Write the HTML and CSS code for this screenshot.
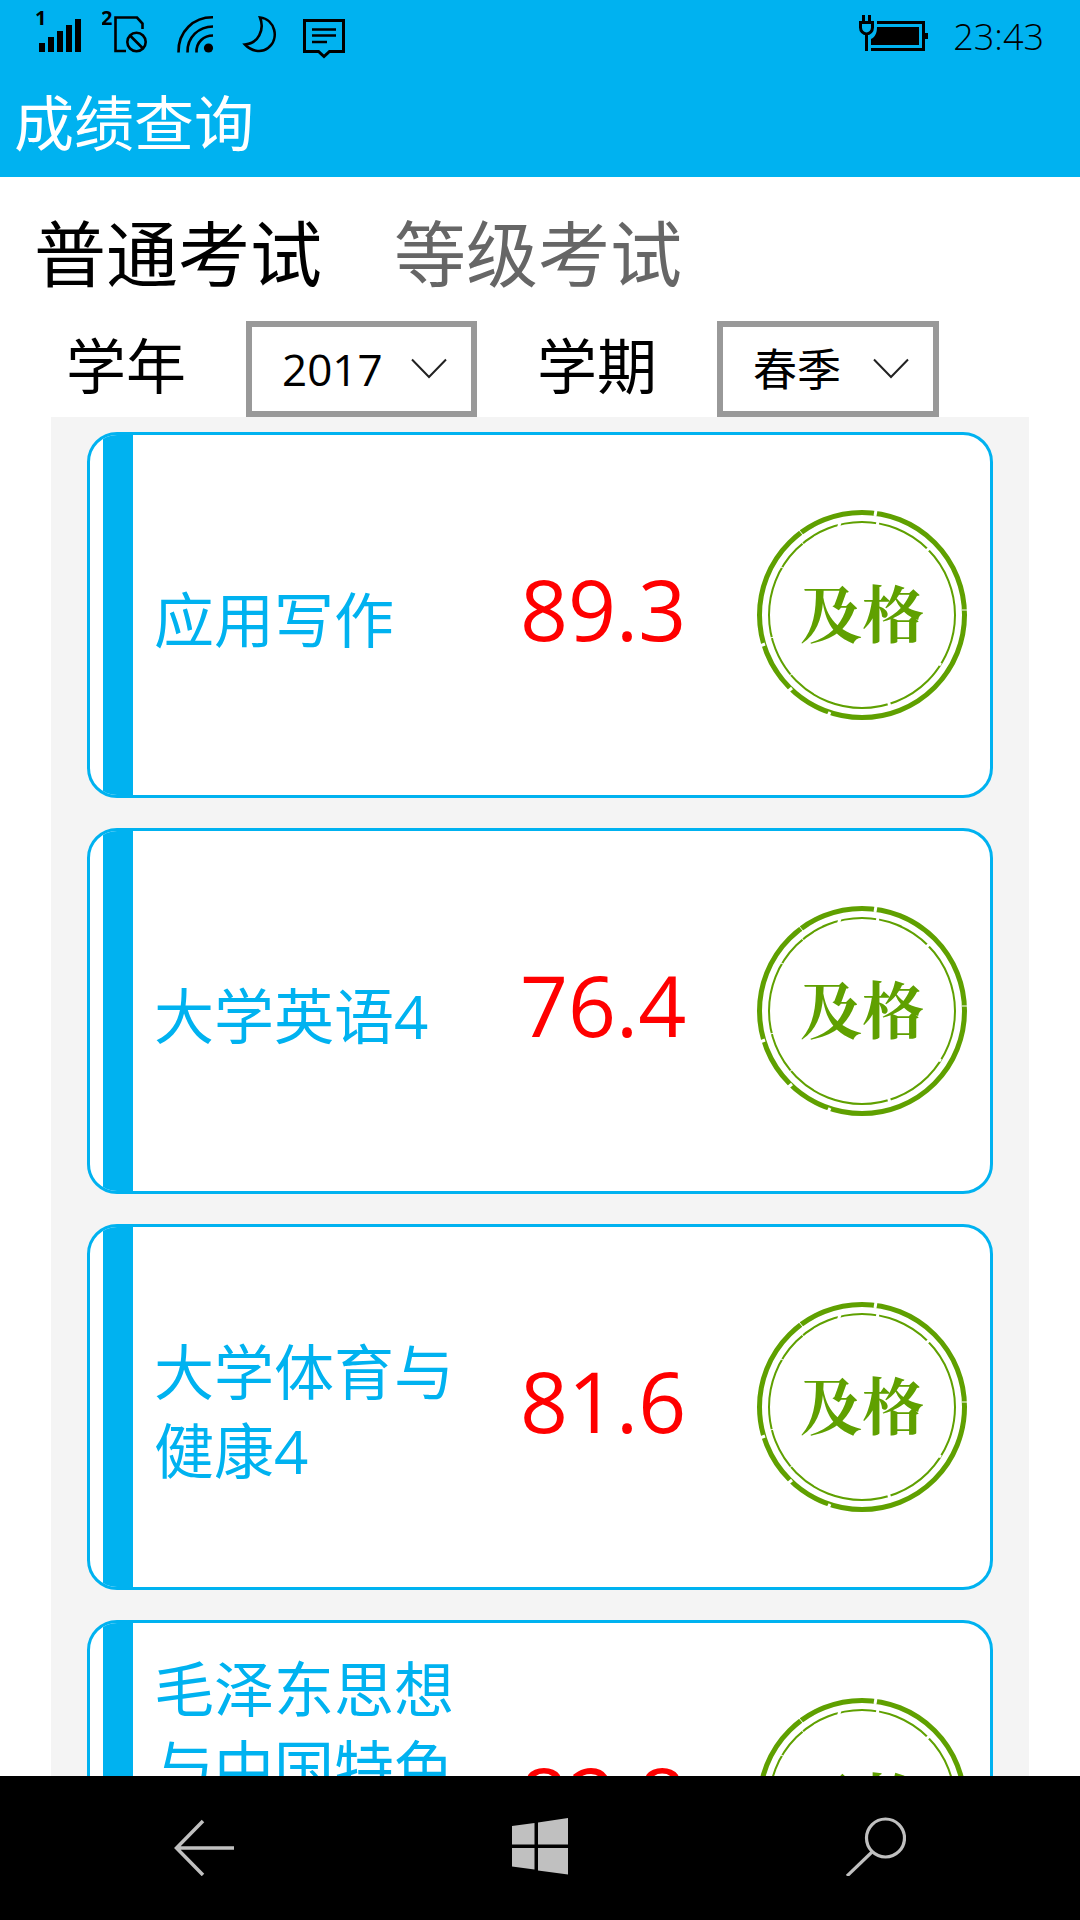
FILE: index.html
```html
<!DOCTYPE html>
<html lang="zh-CN">
<head>
<meta charset="utf-8">
<meta name="viewport" content="width=device-width, initial-scale=1">
<title>成绩查询</title>
<link rel="stylesheet" href="styles.css">
</head>
<body>
<svg class="defs" aria-hidden="true">
  <symbol id="stamp-ring" viewBox="0 0 210 210">
    <g fill="none" stroke="#5fa000">
      <circle cx="105" cy="105" r="102.5" stroke-width="5"/>
      <circle cx="105" cy="105" r="93" stroke-width="2"/>
    </g>
    <g stroke="#fff" stroke-width="3">
      <path d="M119 0l-1 6M121 11l-1 6M169 41l5-4M184 155l-5-4M133 197l-2-7M0 137l8-3M29 183l6-5M70 208l3-6M83 12l-2 8"/>
      <path stroke-width="1" d="M42 20l4 5M43 30l4 5M24 57l4 2M10 129l7-2M31 167l5-4M205 100h5"/>
    </g>
  </symbol>
</svg>

<header class="header">
  <div class="status">
    <div class="status-icons">
      <svg width="45" height="66" viewBox="36 0 45 66" role="img" aria-label="SIM 1">
        <text class="sim-no" x="35" y="25">1</text>
        <path d="M39 43h6v9h-6zM48 37h6v15h-6zM57 31h6v21h-6zM66 25h6v27h-6zM75 19h6v33h-6z"/>
      </svg>
      <svg width="48" height="66" viewBox="102 0 48 66" role="img" aria-label="SIM 2">
        <text class="sim-no" x="101" y="25">2</text>
        <g fill="none" stroke="#000" stroke-width="2.6">
          <path d="M126 51h-10.500V17.500H137l5.500 6V29"/>
          <circle cx="136.500" cy="42" r="9.200"/>
          <path d="M130 35.500l13 13"/>
        </g>
      </svg>
      <svg width="45" height="66" viewBox="171 0 45 66" role="img" aria-label="Wi-Fi">
        <circle cx="208.500" cy="48" r="4.600"/>
        <g fill="none" stroke="#000" stroke-width="2.600">
          <path d="M178.500 52.500C178 31 194 17 213 17.300M187.500 52.500C187 37 199 26.500 213 26.500M196.500 52.500C196 42 204 35.500 213 35.500"/>
        </g>
      </svg>
      <svg width="42" height="66" viewBox="237 0 42 66" role="img" aria-label="免打扰">
        <path fill="none" stroke="#000" stroke-width="2.600" d="M260 17.500C265 30 258 43.500 245 44.500C251 51 261 53.500 268 48C280 39 275 19 260 17.500Z"/>
      </svg>
      <svg width="48" height="66" viewBox="300 0 48 66" role="img" aria-label="消息">
        <path fill="none" stroke="#000" stroke-width="3" d="M304.500 20.500h39v31h-14l-5.500 5-5.500-5h-14z"/>
        <path fill="none" stroke="#000" stroke-width="2.600" d="M312 29.500h24M312 35.500h24M312 42h15"/>
      </svg>
    </div>
    <div class="status-right">
      <svg width="72" height="66" viewBox="856 0 72 66" role="img" aria-label="正在充电">
        <path fill="none" stroke="#000" stroke-width="3" d="M876 22.500h46.500v27H870M865.500 35v16M862.500 15v7M868.500 15v7M859.500 22.500h12v5a6 6.500 0 0 1-12 0z"/>
        <path d="M876 27h42v18h-48v-6c4-2 6-6 6-12zM924 33h3v6h-3z"/>
      </svg>
      <time class="clock">23:43</time>
    </div>
  </div>
  <h1 class="title">成绩查询</h1>
</header>

<nav class="tabs">
  <button class="tab tab-active" type="button">普通考试</button>
  <button class="tab" type="button">等级考试</button>
</nav>

<form class="filters">
  <label class="filter-label" for="year">学年</label>
  <div class="select-box">
    <select id="year" class="select"><option>2017</option></select>
    <svg class="chevron" width="36" height="22" viewBox="0 0 36 22"><path d="M1 1.500l17 17.500 17-17.500"/></svg>
  </div>
  <label class="filter-label" for="term">学期</label>
  <div class="select-box">
    <select id="term" class="select"><option>春季</option></select>
    <svg class="chevron" width="36" height="22" viewBox="0 0 36 22"><path d="M1 1.500l17 17.500 17-17.500"/></svg>
  </div>
</form>

<main class="list">
  <article class="card">
    <div class="name">应用写作</div>
    <div class="score">89.3</div>
    <div class="stamp"><svg class="ring"><use href="#stamp-ring"/></svg><span class="stamp-text">及格</span></div>
  </article>
  <article class="card">
    <div class="name">大学英语4</div>
    <div class="score">76.4</div>
    <div class="stamp"><svg class="ring"><use href="#stamp-ring"/></svg><span class="stamp-text">及格</span></div>
  </article>
  <article class="card">
    <div class="name">大学体育与健康4</div>
    <div class="score">81.6</div>
    <div class="stamp"><svg class="ring"><use href="#stamp-ring"/></svg><span class="stamp-text">及格</span></div>
  </article>
  <article class="card">
    <div class="name">毛泽东思想与中国特色社会主义理论体系概论</div>
    <div class="score">82.8</div>
    <div class="stamp"><svg class="ring"><use href="#stamp-ring"/></svg><span class="stamp-text">及格</span></div>
  </article>
</main>

<footer class="navbar">
  <button class="nav-button" type="button" aria-label="返回">
    <svg width="60" height="60" viewBox="0 0 60 60" fill="none" stroke="#c0c0c0" stroke-width="3.500"><path d="M60 32H3M29 5L2.500 32 29 59"/></svg>
  </button>
  <button class="nav-button" type="button" aria-label="开始">
    <svg width="60" height="60" viewBox="0 0 60 60" fill="#c0c0c0"><path d="M2 10l22.500-3v21.500H2zM28 6.500L58 2v26.500H28zM2 32h22.500v21.500L2 50.500zM28 32h30v26.500l-30-4z"/></svg>
  </button>
  <button class="nav-button" type="button" aria-label="搜索">
    <svg width="60" height="60" viewBox="0 0 60 60" fill="none" stroke="#c0c0c0" stroke-width="3.200"><circle cx="39.500" cy="22" r="19"/><path d="M26 36L1 60"/></svg>
  </button>
</footer>
</body>
</html>
```
FILE: styles.css
```css
* {
  box-sizing: border-box;
}

body {
  margin: 0;
  height: 100vh;
  display: flex;
  flex-direction: column;
  background: #fff;
  color: #000;
  font-family: "Open Sans", "Noto Sans CJK SC", sans-serif;
}

button {
  padding: 0;
  border: 0;
  background: none;
  color: inherit;
  font: inherit;
}

.defs {
  display: none;
}

/* Header */
.header {
  flex: none;
  background: #00b2f0;
}

.status {
  display: flex;
  justify-content: space-between;
  height: 66px;
  padding: 0 36px;
}

.status-icons {
  display: flex;
  gap: 21px;
}

.status-right {
  display: flex;
  gap: 24px;
}

.sim-no {
  font-size: 20px;
  font-weight: 700;
}

.clock {
  font-size: 36px;
  font-weight: 300;
  line-height: 74px;
}

.title {
  margin: 0;
  padding: 3px 14px 0;
  color: #fff;
  font-size: 60px;
  font-weight: 400;
  line-height: 108px;
}

/* Tabs */
.tabs {
  flex: none;
  display: flex;
  gap: 72px;
  padding: 8px 34px 0;
}

.tab {
  color: #666;
  font-size: 72px;
  line-height: 136px;
}

.tab-active {
  color: #000;
}

/* Filters */
.filters {
  flex: none;
  display: flex;
  gap: 60px;
  padding: 0 66px;
}

.filter-label {
  font-size: 60px;
  line-height: 90px;
}

.select-box {
  position: relative;
}

.select {
  display: block;
  min-width: 222px;
  height: 96px;
  padding: 0 88px 0 30px;
  border: 6px solid #999;
  border-radius: 0;
  appearance: none;
  background: #fff;
  color: #000;
  font-family: inherit;
  font-size: 44px;
}

.chevron {
  position: absolute;
  top: 37px;
  right: 30px;
  fill: none;
  stroke: #222;
  stroke-width: 2;
  pointer-events: none;
}

/* Score list */
.list {
  flex: 1;
  min-height: 0;
  overflow-y: auto;
  scrollbar-width: none;
  display: flex;
  flex-direction: column;
  gap: 30px;
  margin: 0 51px;
  padding: 15px 36px;
  background: #f4f4f4;
}

.card {
  flex: none;
  display: flex;
  align-items: center;
  min-height: 366px;
  padding-right: 23px;
  border: 3px solid #00b2f0;
  border-radius: 30px;
  overflow: hidden;
  background: #fff;
}

.card::before {
  content: "";
  flex: none;
  align-self: stretch;
  width: 30px;
  margin: 0 21px 0 13px;
  background: #00b2f0;
}

.name {
  flex: 1;
  margin-right: 66px;
  padding-top: 10px;
  color: #00b2f0;
  font-size: 60px;
  line-height: 79px;
}

.score {
  flex: none;
  width: 237px;
  padding-bottom: 12px;
  color: #f00;
  font-size: 84px;
  line-height: 120px;
}

.stamp {
  flex: none;
  display: grid;
  place-items: center;
}

.ring,
.stamp-text {
  grid-area: 1 / 1;
}

.ring {
  width: 210px;
  height: 210px;
}

.stamp-text {
  padding-bottom: 6px;
  color: #5fa000;
  font-family: "Noto Serif CJK SC", "Noto Sans CJK SC", serif;
  font-size: 62px;
  font-weight: 700;
  line-height: 80px;
}

/* Bottom navigation */
.navbar {
  flex: none;
  display: grid;
  grid-template-columns: repeat(3, 1fr);
  height: 144px;
  padding: 0 36px 4px;
  background: #000;
}

.nav-button {
  display: flex;
  align-items: center;
  justify-content: center;
}
```
